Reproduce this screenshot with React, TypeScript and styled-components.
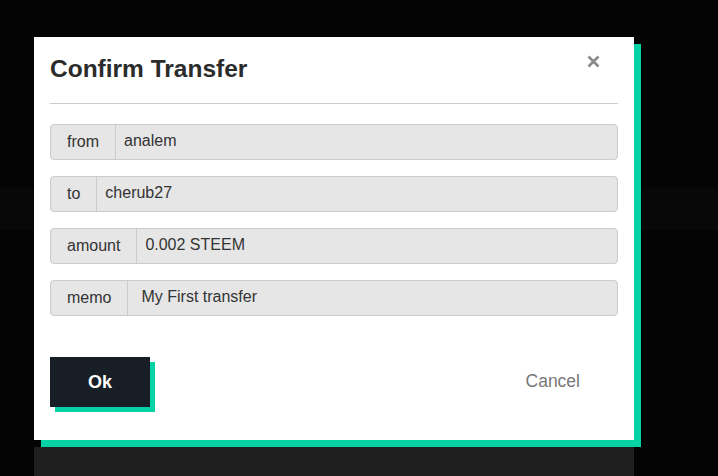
import React from 'react'
import styled, { createGlobalStyle } from 'styled-components'

const GlobalStyle = createGlobalStyle`
  html, body {
    margin: 0;
    padding: 0;
    background: #040404;
  }
  body {
    font-family: "Liberation Sans", Arial, sans-serif;
  }
`

const accent = '#05d3a5'

const Page = styled.div`
  width: 718px;
  height: 476px;
  overflow: hidden;
  box-sizing: border-box;
  padding: 37px 0 0 34px;
  background: linear-gradient(
    to bottom,
    #040404 0,
    #040404 188px,
    #080808 188px,
    #080808 230px,
    #040404 230px
  );
`

const Dialog = styled.div`
  width: 600px;
  display: flex;
  flex-direction: column;
`

const Card = styled.div`
  background: #fff;
  box-sizing: border-box;
  padding: 0 16px 33px;
  box-shadow: 7px 7px 0 ${accent};
`

const Header = styled.div`
  height: 67px;
  box-sizing: border-box;
  padding-top: 18px;
  border-bottom: 1px solid #cccccc;
  display: flex;
  justify-content: space-between;
  align-items: flex-start;
`

const Title = styled.h2`
  margin: 2px 0 0;
  font-size: 24.5px;
  line-height: 1;
  font-weight: bold;
  color: #2b2b2b;
`

const CloseButton = styled.button`
  border: 0;
  background: none;
  padding: 0;
  margin-right: 18px;
  width: 13px;
  height: 13px;
  display: flex;
  cursor: pointer;
`

const Fields = styled.div`
  margin-top: 20px;
  display: flex;
  flex-direction: column;
  gap: 16px;
`

const Group = styled.div`
  height: 36px;
  box-sizing: border-box;
  display: flex;
  background: #e6e6e6;
  border: 1px solid #cccccc;
  border-radius: 4px;
  font-size: 16px;
  color: #333;
`

const Addon = styled.span`
  display: flex;
  align-items: center;
  padding: 0 16px;
  border-right: 1px solid #cccccc;
`

const Value = styled.span<{ $indent: number }>`
  display: flex;
  align-items: center;
  flex: 1;
  padding: 0 0 3px ${props => props.$indent}px;
`

const Footer = styled.div`
  margin-top: 41px;
  display: flex;
  justify-content: space-between;
  align-items: center;
`

const OkButton = styled.button`
  width: 100px;
  height: 50px;
  border: 0;
  background: #171e26;
  color: #fff;
  font-family: "Liberation Sans", Arial, sans-serif;
  font-weight: bold;
  font-size: 18px;
  box-shadow: 5px 5px 0 ${accent};
  cursor: pointer;
`

const CancelButton = styled.button`
  border: 0;
  background: none;
  margin: 0 38px 1px 0;
  padding: 0;
  color: #777;
  font-family: "Liberation Sans", Arial, sans-serif;
  font-size: 17.5px;
  cursor: pointer;
`

const Behind = styled.div`
  margin-top: 7px;
  height: 40px;
  background: #1f1f1f;
`

const fields = [
  { label: 'from', value: 'analem', indent: 8 },
  { label: 'to', value: 'cherub27', indent: 8 },
  { label: 'amount', value: '0.002 STEEM', indent: 8 },
  { label: 'memo', value: 'My First transfer', indent: 13 },
]

const CloseIcon = () => (
  <svg width='13' height='13' viewBox='0 0 13 13'>
    <path d='M1.5 1.5 L11.5 11.5 M11.5 1.5 L1.5 11.5' stroke='#8a8a8a' strokeWidth='2.6' />
  </svg>
)

const App: React.FC = () => (
  <>
    <GlobalStyle />
    <Page>
      <Dialog>
        <Card>
          <Header>
            <Title>Confirm Transfer</Title>
            <CloseButton aria-label='close'>
              <CloseIcon />
            </CloseButton>
          </Header>
          <Fields>
            {fields.map(f =>
              <Group key={f.label}>
                <Addon>{f.label}</Addon>
                <Value $indent={f.indent}>{f.value}</Value>
              </Group>
            )}
          </Fields>
          <Footer>
            <OkButton>Ok</OkButton>
            <CancelButton>Cancel</CancelButton>
          </Footer>
        </Card>
        <Behind />
      </Dialog>
    </Page>
  </>
)

export default App
